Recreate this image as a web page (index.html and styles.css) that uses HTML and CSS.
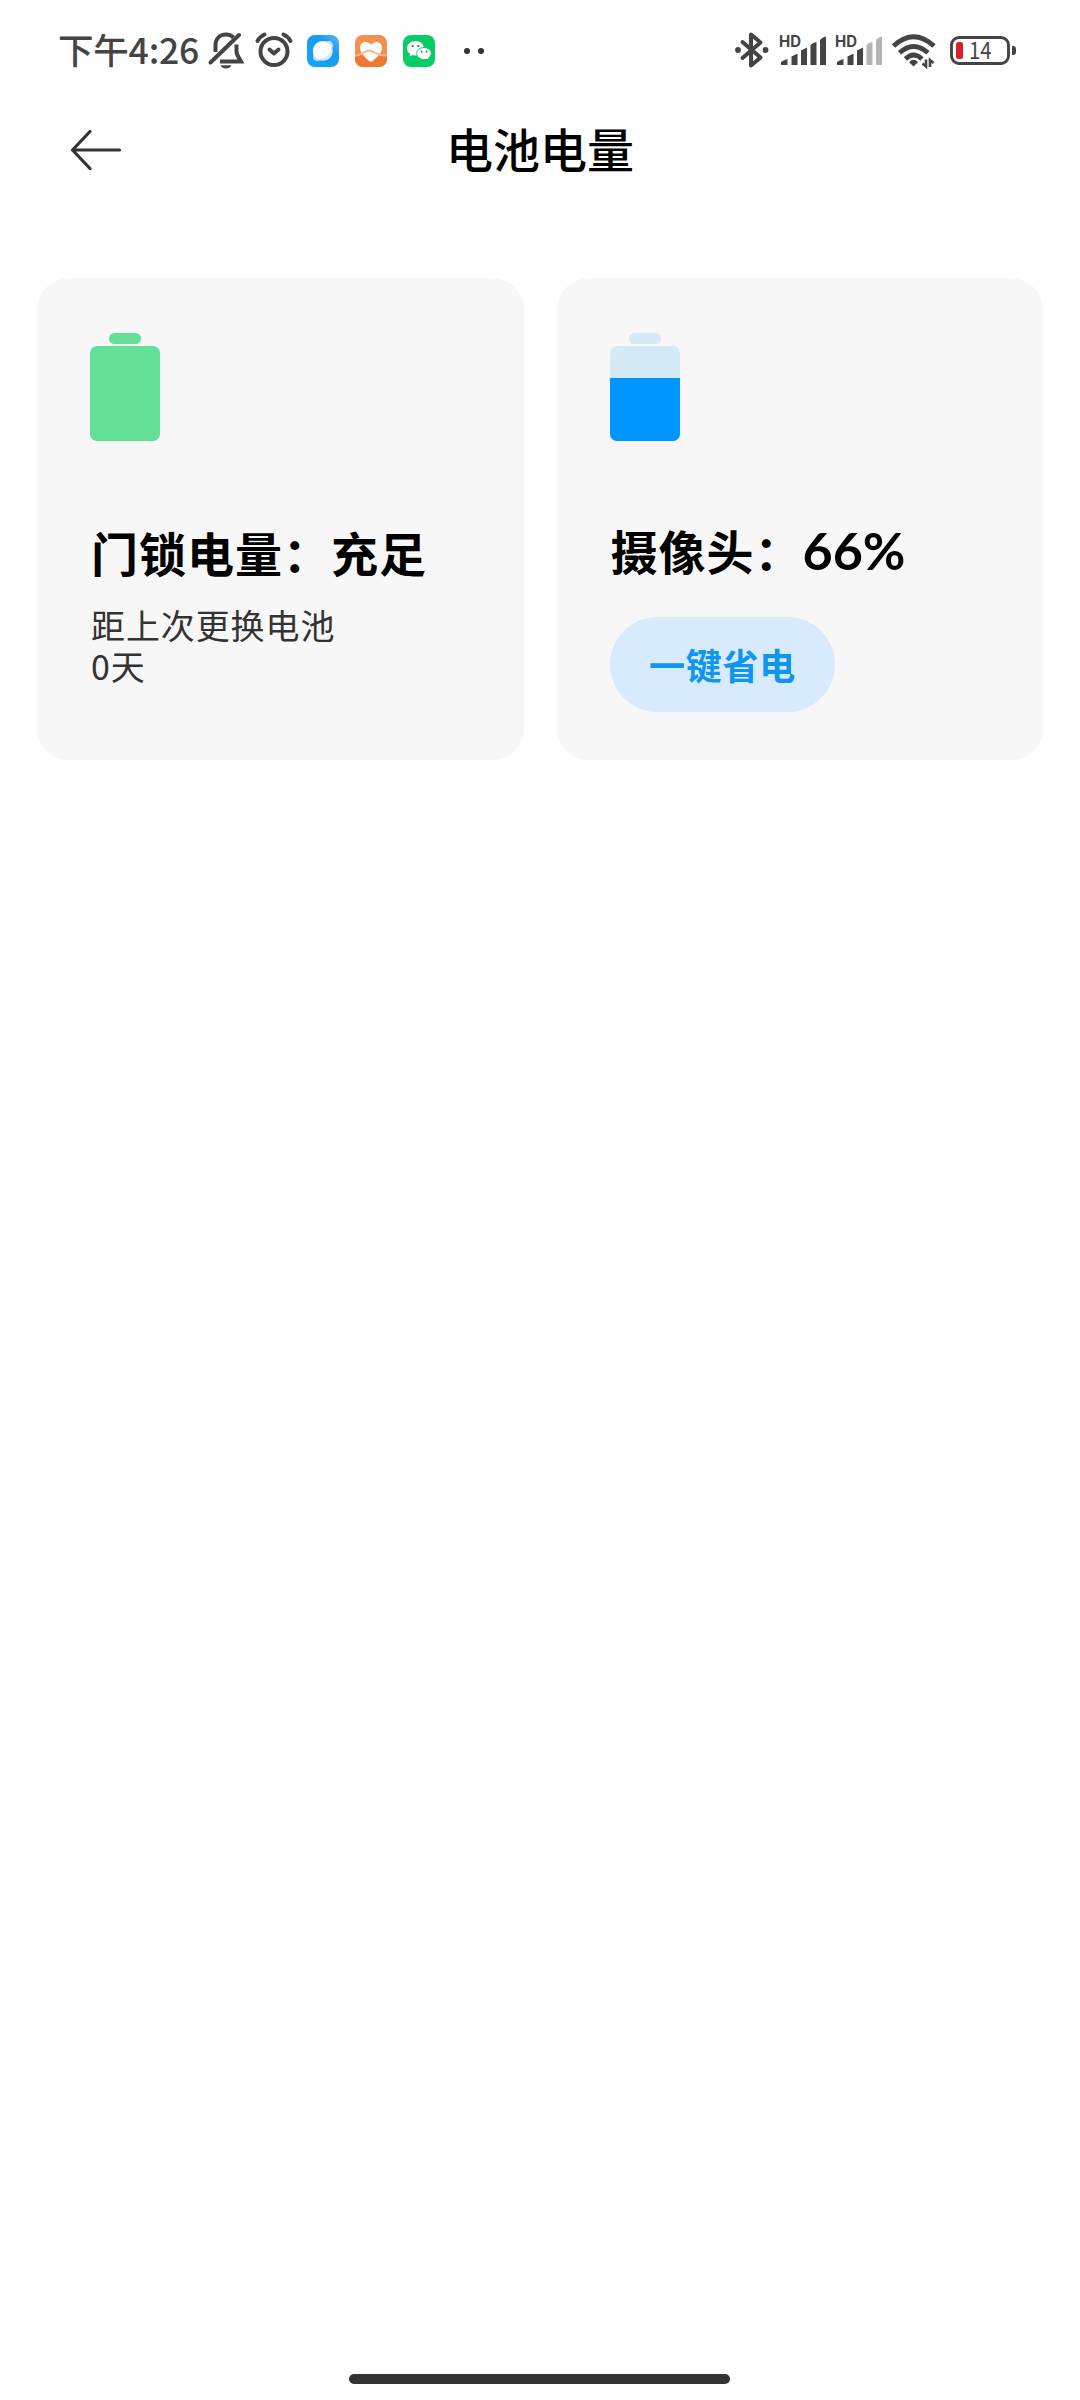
FILE: index.html
```html
<!DOCTYPE html>
<html lang="zh-CN">
<head>
<meta charset="utf-8">
<title>电池电量</title>
<link rel="stylesheet" href="styles.css">
</head>
<body>
<div class="screen">
  <div class="status">
    <div class="status-left">
      <span class="clock">下午4:26</span>
      <svg class="bell" width="36" height="38" viewBox="0 0 36 38" fill="none" stroke="#444" stroke-width="4">
        <path d="M25.500 5.500C23.500 3.600 21 2.600 18 2.600C11.500 2.600 7.500 7 7.500 13.500V20"/>
        <path d="M28.500 12.500V19.500C28.500 23 30.500 25 33 29.500H12"/>
        <path d="M2.500 30.500L31 3" stroke-linecap="round"/>
        <path d="M12.500 33.200H23.500C22.500 35.500 20.500 36.500 18 36.500S13.500 35.500 12.500 33.200Z" fill="#444" stroke="none"/>
      </svg>
      <svg class="alarm" width="38" height="36" viewBox="0 0 38 36" fill="none" stroke="#444" stroke-width="4" stroke-linecap="round" stroke-linejoin="round">
        <circle cx="19" cy="19.500" r="13.500"/>
        <path d="M14.500 17.500L19 21.500L23.500 17.500"/>
        <path d="M2.500 9Q5 4.500 9.500 2.500M35.500 9Q33 4.500 28.500 2.500"/>
      </svg>
      <div class="apps">
        <svg width="32" height="32" viewBox="0 0 32 32">
          <defs><linearGradient id="sky" x1="1" y1="0" x2="0" y2="1"><stop offset="0" stop-color="#62b5f8"/><stop offset=".35" stop-color="#169cf0"/><stop offset="1" stop-color="#14a7f5"/></linearGradient></defs>
          <rect width="32" height="32" rx="8" fill="url(#sky)"/>
          <ellipse cx="16" cy="16" rx="12.500" ry="6.500" transform="rotate(-45 16 16)" fill="#b9e0fb"/>
          <circle cx="16" cy="16" r="9.800" fill="#d5ecfc"/>
          <path d="M24.500 11.500A9.800 9.800 0 1 0 11 24.500Q24 22 24.500 11.500Z" fill="#fff"/>
        </svg>
        <svg width="32" height="32" viewBox="0 0 32 32">
          <rect width="32" height="32" rx="8" fill="#f2904f"/>
          <path d="M0 20C6 22 9 15 14 15S22 22 32 20V24A8 8 0 0 1 24 32H8A8 8 0 0 1 0 24Z" fill="#ee792e"/>
          <path d="M16 27C11 24 5 18 5 13C5 6.500 12 5 16 9.500C20 5 27 6.500 27 13C27 18 21 24 16 27Z" fill="#fff"/>
          <path d="M0 20.500C6 22 9 15.500 14 15.500S21 21 32 20.500" fill="none" stroke="#f6b78d" stroke-width="1.800"/>
        </svg>
        <svg width="32" height="32" viewBox="0 0 32 32">
          <rect width="32" height="32" rx="8" fill="#07cd66"/>
          <path d="M12.500 6C7.700 6 4 9.200 4 13.200C4 15.500 5.200 17.500 7.200 18.800L6.500 21.500L9.500 20C10.500 20.300 11.500 20.400 12.500 20.400C17.300 20.400 21 17.200 21 13.200S17.300 6 12.500 6Z" fill="#fff"/>
          <path d="M21 12.500C16.900 12.500 13.700 15.200 13.700 18.500S16.900 24.500 21 24.500C21.900 24.500 22.700 24.400 23.500 24.100L26 25.300L25.500 23C27.200 21.900 28.300 20.300 28.300 18.500C28.300 15.200 25.100 12.500 21 12.500Z" fill="#fff" stroke="#07cd66"/>
          <g fill="#087c45"><circle cx="9.700" cy="11" r="1.100"/><circle cx="15.300" cy="11" r="1.100"/><circle cx="18.700" cy="16.700" r=".9"/><circle cx="23.500" cy="16.700" r=".9"/></g>
        </svg>
      </div>
      <div class="more"><i></i><i></i></div>
    </div>
    <div class="status-right">
      <svg class="bt" width="34" height="36" viewBox="0 0 34 36" fill="none" stroke="#444" stroke-width="4" stroke-linejoin="round" stroke-linecap="round">
        <path d="M7.500 10L25.500 25.500L16 33.500V2.500L25.500 10.500L7.500 26"/>
        <circle cx="3" cy="18" r="2.900" fill="#444" stroke="none"/><circle cx="30.500" cy="18" r="2.900" fill="#444" stroke="none"/>
      </svg>
      <svg class="signal" width="48" height="32" viewBox="0 0 48 32" fill="#444">
        <text class="hd" x="0" y="11.500" textLength="22" lengthAdjust="spacingAndGlyphs">HD</text>
        <path d="M2 30V27.500Q2 26 8.500 24V30Z"/><path d="M12.500 30V21.500L18.500 18.500V30Z"/><path d="M22 30V15.500L28 12.500V30Z"/><path d="M31.500 30V10Q34 7.500 37.500 7V30Z"/><path d="M41 30V5Q43 2 47 1.500V30Z"/>
      </svg>
      <svg class="signal two" width="48" height="32" viewBox="0 0 48 32" fill="#444">
        <text class="hd" x="0" y="11.500" textLength="22" lengthAdjust="spacingAndGlyphs">HD</text>
        <path d="M2 30V27.500Q2 26 8.500 24V30Z"/><path d="M12.500 30V21.500L18.500 18.500V30Z"/><path d="M22 30V15.500L28 12.500V30Z"/>
        <g fill="#b4b4b4"><path d="M31.500 30V10Q34 7.500 37.500 7V30Z"/><path d="M41 30V5Q43 2 47 1.500V30Z"/></g>
      </svg>
      <svg class="wifi" width="44" height="34" viewBox="0 0 44 34" fill="none" stroke="#444" stroke-width="4.800">
        <path d="M1.500 12Q21.500 -6.500 42 12"/><path d="M7.500 18.800Q21.500 6 36 18.800"/><path d="M13.500 25Q21.500 17 30 25"/>
        <path d="M17 28.200Q21.500 23.500 26 28.200L21.500 32.500Z" fill="#444" stroke="none"/>
        <path d="M34 25.500V32.500L30.500 29.500M38 33V26L41.500 29" stroke-width="2.600"/>
      </svg>
      <svg class="batt" width="66" height="30" viewBox="0 0 66 30">
        <rect x="1.500" y="1.500" width="57" height="26" rx="7.500" fill="none" stroke="#444" stroke-width="2.900"/>
        <rect x="6" y="6" width="7" height="17" rx="2.500" fill="#d3202b"/>
        <path d="M62 10H63Q66 10 66 13V16Q66 19 63 19H62Z" fill="#444"/>
        <text class="pct" x="19" y="22.500" textLength="22.500" lengthAdjust="spacingAndGlyphs">14</text>
      </svg>
    </div>
  </div>
  <header class="nav">
    <svg class="back" width="52" height="44" viewBox="0 0 52 44" fill="none" stroke="#333" stroke-width="3.200" stroke-linecap="round" stroke-linejoin="round">
      <path d="M20 3.500L2.500 22L20 40.500M2.500 22H49.500"/>
    </svg>
    <h1>电池电量</h1>
  </header>
  <main class="cards">
    <section class="card">
      <div class="battery green"><span class="cap"></span><span class="body"></span></div>
      <h2>门锁电量：充足</h2>
      <p>距上次更换电池<br>0天</p>
    </section>
    <section class="card">
      <div class="battery blue"><span class="cap"></span><span class="body"><span class="level"></span></span></div>
      <h2 class="camera">摄像头：<span class="num">66%</span></h2>
      <button>一键省电</button>
    </section>
  </main>
  <div class="home"></div>
</div>
</body>
</html>
```

FILE: styles.css
```css
* { box-sizing: border-box; }
body { margin: 0; background: #fff; font-family: "Noto Sans CJK SC", sans-serif; color: #000; }
h1, h2, p { margin: 0; }
svg { display: block; flex: none; overflow: visible; }
.screen { width: 1080px; height: 2400px; display: flex; flex-direction: column; background: #fefefe; }
.status { height: 102px; padding: 0 64px 0 58px; display: flex; justify-content: space-between; }
.status-left, .status-right { display: flex; align-items: center; }
.clock { width: 150px; margin-top: -4px; font-size: 35.500px; line-height: 98px; font-weight: 500; letter-spacing: -0.2px; color: #444; white-space: nowrap; }
.alarm { margin-left: 11px; margin-top: -2px; }
.apps { display: flex; gap: 16px; margin-left: 14px; }
.more { display: flex; gap: 8px; margin-left: 29px; }
.more i { width: 6px; height: 6px; border-radius: 50%; background: #333; }
.bt { margin-right: 10px; margin-top: -2px; }
.signal { margin-right: 8px; }
.hd { font: 700 15.500px Inter, sans-serif; }
.wifi { margin-right: 14px; margin-left: 1px; }
.batt { margin-top: -1px; }
.pct { font: 400 23px "Noto Sans CJK SC", sans-serif; fill: #444; }
.nav { height: 96px; padding: 0 70px; display: grid; grid-template-columns: 52px 1fr 52px; align-items: center; }
.nav h1 { margin-top: -5px; text-align: center; font-size: 47px; line-height: 70px; font-weight: 500; }
.cards { margin-top: 80px; padding: 0 37px; display: grid; grid-template-columns: 1fr 1fr; gap: 33px; }
.card { height: 482px; padding: 55px 53px 0; border-radius: 32px; background: #f7f7f7; }
.battery { width: 70px; display: flex; flex-direction: column; align-items: center; gap: 2px; }
.cap { width: 32px; height: 11px; border-radius: 6px; background: #62e095; }
.body { width: 70px; height: 95px; border-radius: 7px; background: #62e095; overflow: hidden; display: flex; align-items: flex-end; }
.blue .cap, .blue .body { background: #d5eaf7; }
.level { width: 100%; height: 66%; background: #0096ff; }
h2 { margin-top: 76px; padding-left: 1px; height: 70px; font-size: 47px; line-height: 70px; font-weight: 700; letter-spacing: 1px; white-space: nowrap; }
.camera { margin-top: 74px; }
.num { font-family: Lato, sans-serif; font-size: 52px; line-height: 1; letter-spacing: 0; }
.card p { margin-top: 17px; padding-left: 1px; font-size: 34px; line-height: 41px; font-weight: 400; letter-spacing: 0.9px; color: #333; }
button { display: block; margin-top: 32px; width: 225px; height: 95px; padding: 0 0 0 1px; border: 0; border-radius: 48px; background: #d8eafe; color: #0f96f0; font: 700 36px/93px "Noto Sans CJK SC", sans-serif; letter-spacing: 0.7px; }
.home { width: 381px; height: 10px; margin: auto auto 16px 349px; border-radius: 5px; background: #333; }
```
